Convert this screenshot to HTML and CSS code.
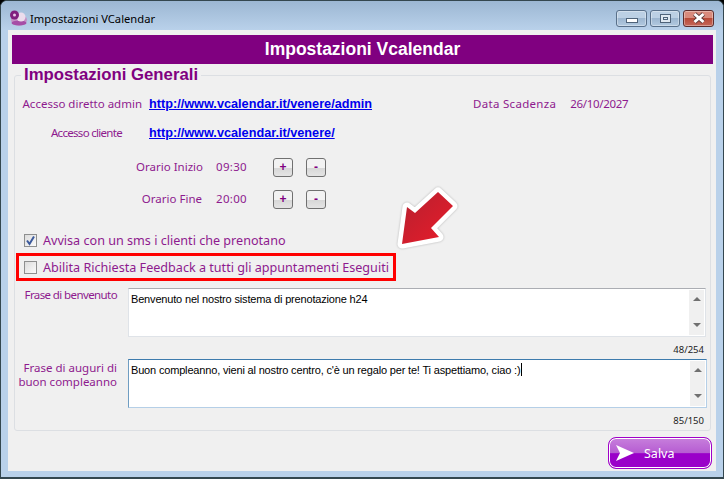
FILE: index.html
```html
<!DOCTYPE html>
<html lang="it">
<head>
    <meta charset="UTF-8">
    <meta name="viewport" content="width=device-width, initial-scale=1.0">
    <title>Impostazioni VCalendar</title>
    <link rel="stylesheet" href="styles.css">
</head>
<body>
    <div class="window">
        <div class="titlebar">
            <svg class="app-icon" width="22" height="22" viewBox="0 0 22 22">
                <ellipse cx="10" cy="13" rx="8" ry="5.5" fill="#c48fc4"/>
                <ellipse cx="10" cy="16" rx="7.5" ry="2.5" fill="#a64da6"/>
                <circle cx="12" cy="10" r="4.5" fill="#ecdcec"/>
                <circle cx="5.5" cy="8" r="4.5" fill="#80207f"/>
                <circle cx="5.5" cy="8" r="1.5" fill="#e8c8e8"/>
            </svg>
            <span class="title-text">Impostazioni VCalendar</span>
            <div class="caption-buttons">
                <div class="caption-btn"><span class="glyph-min"></span></div>
                <div class="caption-btn btn-max"><span class="glyph-max"></span></div>
                <div class="caption-btn close">
                    <svg width="18" height="12" viewBox="0 0 18 12">
                        <path d="M4.5 2 L13.5 10 M13.5 2 L4.5 10" stroke="#5b3a3a" stroke-width="4.5"/>
                        <path d="M4.5 2 L13.5 10 M13.5 2 L4.5 10" stroke="#fff" stroke-width="3"/>
                    </svg>
                </div>
            </div>
        </div>

        <div class="client">
            <h1 class="header">Impostazioni Vcalendar</h1>

            <fieldset class="group">
                <legend>Impostazioni Generali</legend>

                <div class="row row-admin">
                    <span class="label label-admin">Accesso diretto admin</span>
                    <a class="link" href="#">http://www.vcalendar.it/venere/admin</a>
                    <span class="label label-expiry">Data Scadenza</span>
                    <span class="label label-date">26/10/2027</span>
                </div>
                <div class="row row-client">
                    <span class="label label-client">Accesso cliente</span>
                    <a class="link" href="#">http://www.vcalendar.it/venere/</a>
                </div>

                <div class="row row-start">
                    <span class="label label-start">Orario Inizio</span>
                    <span class="label time">09:30</span>
                    <button class="step">+</button>
                    <button class="step">-</button>
                </div>
                <div class="row row-end">
                    <span class="label label-end">Orario Fine</span>
                    <span class="label time">20:00</span>
                    <button class="step">+</button>
                    <button class="step">-</button>
                </div>

                <div class="row check-row">
                    <span class="check checked">
                        <svg width="11" height="11" viewBox="0 0 11 11">
                            <path d="M2 5.5 L4.5 9 L9 1.5" fill="none" stroke="#3c5a9c" stroke-width="2"/>
                        </svg>
                    </span>
                    <span class="check-text">Avvisa con un sms i clienti che prenotano</span>
                </div>
                <div class="row check-row highlight">
                    <span class="check"></span>
                    <span class="check-text">Abilita Richiesta Feedback a tutti gli appuntamenti Eseguiti</span>
                </div>

                <div class="memo-row memo-first">
                    <span class="label memo-label memo-label-one">Frase di benvenuto</span>
                    <div class="memo">
                        <div class="memo-text">Benvenuto nel nostro sistema di prenotazione h24</div>
                        <div class="scrollbar"><i class="arrow-up"></i><i class="arrow-down"></i></div>
                    </div>
                </div>
                <div class="count">48/254</div>

                <div class="memo-row">
                    <span class="label memo-label memo-label-two">Frase di auguri di<br>buon compleanno</span>
                    <div class="memo focused">
                        <div class="memo-text">Buon compleanno, vieni al nostro centro, c'è un regalo per te! Ti aspettiamo, ciao :)<span class="caret"></span></div>
                        <div class="scrollbar"><i class="arrow-up"></i><i class="arrow-down"></i></div>
                    </div>
                </div>
                <div class="count">85/150</div>
            </fieldset>

            <div class="footer">
                <button class="save">
                    <svg width="18" height="16" viewBox="0 0 18 16">
                        <path d="M0 0 L18 8 L0 16 L4 8 Z" fill="#fff"/>
                    </svg>
                    <span>Salva</span>
                </button>
            </div>
        </div>

        <svg class="arrow" width="75" height="70" viewBox="390 185 75 70">
            <defs>
                <linearGradient id="arrowFill" x1="0" y1="0" x2="1" y2="1">
                    <stop offset="0" stop-color="#b5202f"/>
                    <stop offset="1" stop-color="#ea1c2a"/>
                </linearGradient>
            </defs>
            <path class="arrow-shape" d="M402 244 L407 207 L415 213 L438 192 L453 206 L431 228 L439 237 Z" fill="url(#arrowFill)"/>
        </svg>
    </div>
</body>
</html>
```

FILE: styles.css
```css
:root {
    --color-purple: #800080;
    --color-label: #8e1a8e;
    --color-frame: #b9d1ea;
    --color-panel: #f0f0f0;
}

* {
    box-sizing: border-box;
}

body {
    margin: 0;
    background: #000;
    font-family: 'Noto Sans', 'Liberation Sans', sans-serif;
    font-size: 11.5px;
    color: var(--color-label);
}

.window {
    position: relative;
    width: 724px;
    height: 479px;
    display: flex;
    flex-direction: column;
    border-radius: 7px 7px 0 0;
    border: 1px solid #34474f;
    border-bottom-width: 2px;
    background: var(--color-frame);
    overflow: hidden;
}

.titlebar {
    height: 29px;
    flex-shrink: 0;
    display: flex;
    align-items: center;
    padding: 5px 9px 0 8px;
    background: linear-gradient(#9cb7d3, #b9d1ea);
}

.app-icon {
    margin-right: -1px;
}

.title-text {
    font-size: 11.2px;
    color: #000;
}

.caption-buttons {
    margin-left: auto;
    display: flex;
    gap: 3px;
}

.caption-btn {
    width: 31px;
    height: 17px;
    display: flex;
    align-items: center;
    justify-content: center;
    border: 1px solid #59708a;
    border-radius: 3px;
    background: linear-gradient(#bcd0e4 0 45%, #9db6d0 50%, #b2c9e0);
    box-shadow: inset 0 0 0 1px rgba(255, 255, 255, 0.35);
}

.caption-btn.btn-max {
    width: 30px;
}

.caption-btn.close {
    width: 31px;
    border-color: #5c2d2d;
    background: linear-gradient(#d98a7c 0 45%, #b84a38 50%, #c5685a);
}

.glyph-min {
    width: 12px;
    height: 5px;
    margin-top: 5px;
    background: #fff;
    border: 1px solid #4f6379;
}

.glyph-max {
    width: 11px;
    height: 9px;
    background: #dfe8f1;
    border: 1px solid #4f6379;
    box-shadow: inset 0 0 0 2px #dfe8f1, inset 0 0 0 3px #4f6379;
}

.client {
    flex: 1;
    margin: 0 7px 6px;
    padding: 5px 3px 0 4px;
    background: var(--color-panel);
}

.header {
    margin: 0;
    height: 29px;
    background: var(--color-purple);
    color: #fff;
    font-family: 'Liberation Sans', sans-serif;
    font-size: 17.5px;
    font-weight: bold;
    line-height: 29px;
    text-align: center;
}

.group {
    margin: 1px 2px 0;
    padding: 0;
    height: 366px;
    border: 1px solid #dcdfe3;
    border-radius: 3px;
}

.group legend {
    margin-left: 6px;
    padding: 0 3px;
    height: 20px;
    color: var(--color-purple);
    font-family: 'Liberation Sans', sans-serif;
    font-size: 16.75px;
    font-weight: bold;
    line-height: 20px;
}

.row {
    height: 20px;
    display: flex;
    align-items: center;
}

.row-admin {
    margin-top: 9px;
}

.row-client {
    margin-top: 9px;
}

.row-start {
    margin-top: 14px;
}

.row-end {
    margin-top: 12px;
}

.label {
    margin-bottom: 2px;
}

.label-admin {
    width: 127px;
    text-align: right;
    margin-right: 7px;
}

.label-client {
    width: 107px;
    text-align: right;
    margin-right: 27px;
    margin-bottom: 1px;
    letter-spacing: -0.7px;
}

.link {
    color: #0000ee;
    font-family: 'Liberation Sans', sans-serif;
    font-size: 12.7px;
    font-weight: bold;
}

.label-expiry {
    margin-left: 101px;
    margin-right: 14px;
    letter-spacing: 0.3px;
}

.label-date {
    letter-spacing: -0.3px;
}

.label-start {
    width: 188px;
    text-align: right;
}

.label-end {
    width: 187px;
    text-align: right;
    margin-right: 1px;
}

.time {
    width: 57px;
    margin-left: 13px;
    letter-spacing: 0.3px;
}

.step {
    width: 20px;
    height: 19px;
    margin-right: 13px;
    padding: 0;
    border: 1px solid #707070;
    border-radius: 3px;
    background: linear-gradient(#f2f2f2 0 50%, #d6d6d6 50%, #e4e4e4);
    color: var(--color-purple);
    font-family: 'Liberation Sans', sans-serif;
    font-size: 12px;
    font-weight: bold;
    line-height: 17px;
}

.check-row {
    margin-top: 21px;
    padding-left: 9px;
}

.check {
    width: 13px;
    height: 13px;
    display: flex;
    align-items: center;
    justify-content: center;
    border: 1px solid #8e8f8f;
    background: linear-gradient(135deg, #dcdcdc, #fbfbfb);
}

.check-text {
    margin-left: 6px;
    font-size: 12.6px;
}

.highlight {
    width: 380px;
    height: 28px;
    margin: 3px 0 0 1px;
    border: 3px solid #f00;
    padding-left: 5px;
}

.memo-row {
    display: flex;
}

.memo-first {
    margin-top: 7px;
}

.memo-label {
    width: 102px;
    margin-right: 11px;
    text-align: right;
    line-height: 14px;
    white-space: nowrap;
}

.memo-label-one {
    letter-spacing: -0.6px;
}

.memo-label-two {
    margin-top: 2px;
}

.memo {
    width: 578px;
    height: 49px;
    display: flex;
    border: 1px solid #dfe3e8;
    border-top-color: #abadb3;
    background: #fff;
}

.memo.focused {
    width: 579px;
    border-color: #b5cfe7;
    border-top-color: #3d7bad;
    border-left-color: #6f9dc2;
}

.memo-text {
    flex: 1;
    padding: 2px;
    color: #000;
    font-family: 'Liberation Sans', sans-serif;
    font-size: 11px;
    letter-spacing: -0.17px;
    line-height: 16px;
}

.caret {
    display: inline-block;
    width: 1px;
    height: 13px;
    margin-left: 1px;
    vertical-align: -2px;
    background: #000;
}

.scrollbar {
    width: 17px;
    display: flex;
    flex-direction: column;
    justify-content: space-between;
    align-items: center;
    padding: 7px 0 8px;
    background: #f0f0f0;
    border: 1px solid #fff;
}

.arrow-up,
.arrow-down {
    width: 0;
    height: 0;
    border-left: 4px solid transparent;
    border-right: 4px solid transparent;
}

.arrow-up {
    border-bottom: 4px solid #707070;
}

.arrow-down {
    border-top: 4px solid #707070;
}

.count {
    height: 22px;
    padding: 6px 6px 0 0;
    text-align: right;
    color: #222;
    font-size: 9.5px;
    line-height: 14px;
}

.footer {
    display: flex;
    justify-content: flex-end;
    padding: 6px 1px 0 0;
}

.save {
    width: 104px;
    height: 32px;
    display: flex;
    align-items: center;
    padding: 0 0 0 7px;
    border: 1px solid #a000c8;
    border-radius: 8px;
    background: linear-gradient(#c77fdc, #b65cd2 50%, #9a00c9 52%, #9a00c9);
    box-shadow: inset 0 0 0 1px #fff;
    color: #fff;
    font-family: 'Noto Sans', 'Liberation Sans', sans-serif;
    font-size: 12.5px;
}

.save span {
    margin-left: 10px;
}

.arrow {
    position: absolute;
    left: 389px;
    top: 184px;
}

.arrow-shape {
    stroke: #fff;
    stroke-width: 9px;
    stroke-linejoin: round;
    paint-order: stroke;
    filter: drop-shadow(0 0 1px rgba(0, 0, 0, 0.25));
}
```
